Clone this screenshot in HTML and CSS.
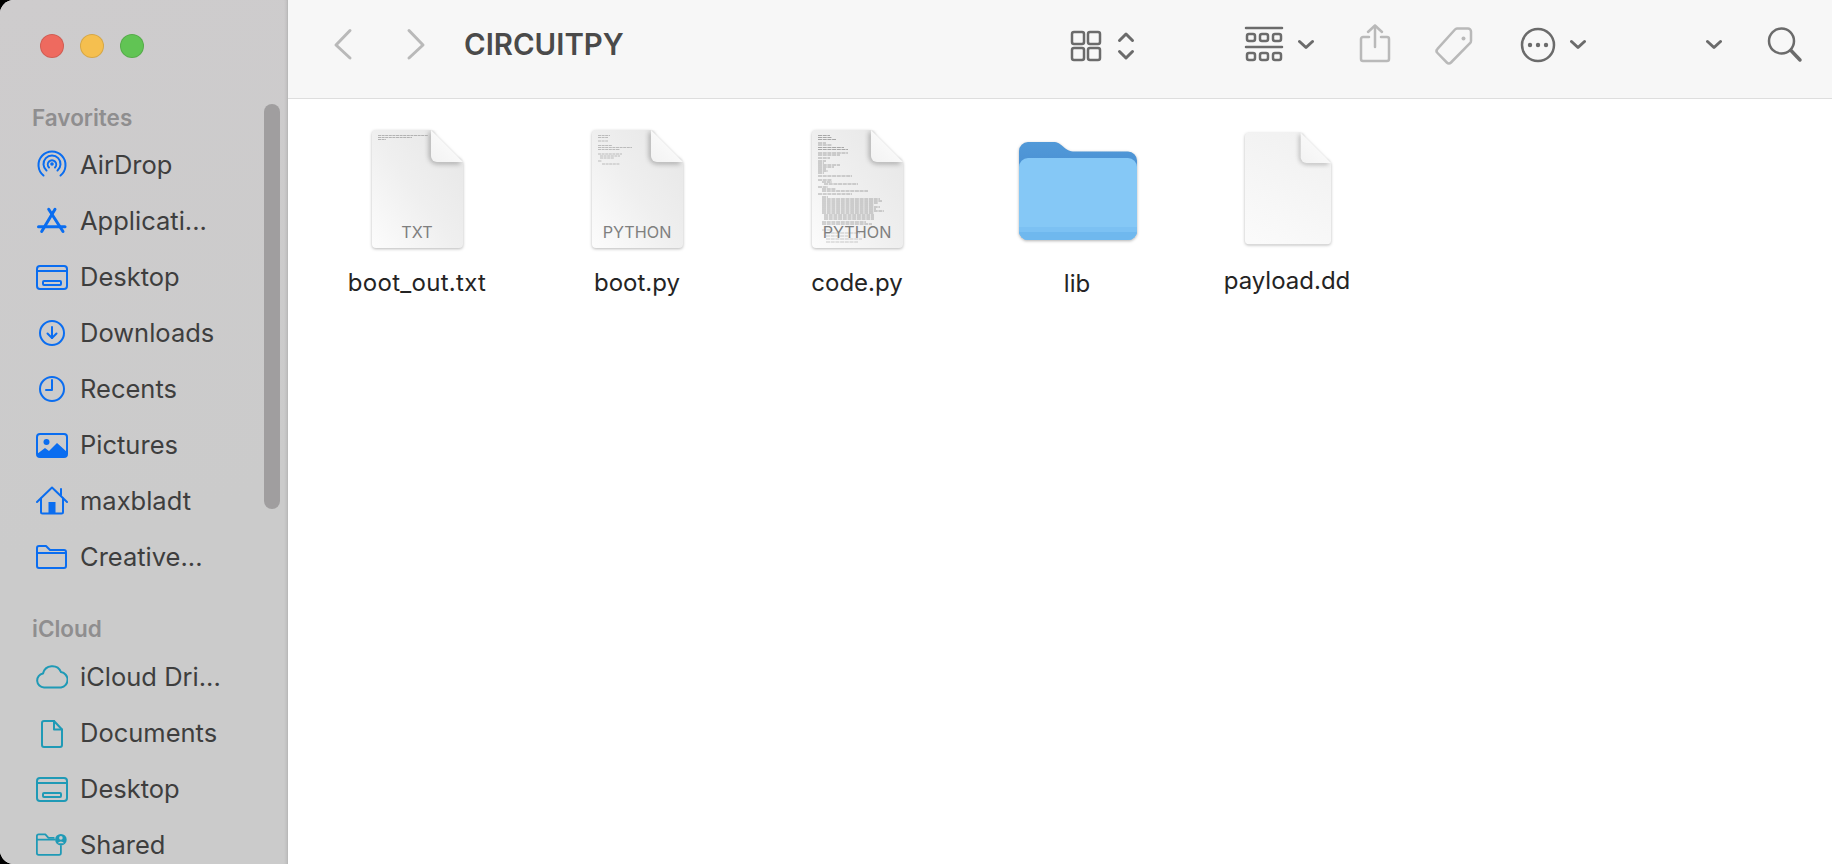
FILE: index.html
```html
<!DOCTYPE html>
<html lang="en">
<head>
    <meta charset="UTF-8">
    <title>CIRCUITPY</title>
    <link rel="stylesheet" href="styles.css">
</head>
<body>
<svg class="defs" width="0" height="0">
    <defs>
        <linearGradient id="paper" x1="0" y1="1" x2="0.9" y2="0.15">
            <stop offset="0" stop-color="#fcfcfc"/>
            <stop offset="0.55" stop-color="#efefef"/>
            <stop offset="1" stop-color="#e8e8e8"/>
        </linearGradient>
        <linearGradient id="blank" x1="0.2" y1="1" x2="0.6" y2="0">
            <stop offset="0" stop-color="#fafafa"/>
            <stop offset="1" stop-color="#f1f1f1"/>
        </linearGradient>
        <linearGradient id="fold" x1="0" y1="1" x2="1" y2="0">
            <stop offset="0" stop-color="#f2f2f2"/>
            <stop offset="1" stop-color="#ffffff"/>
        </linearGradient>
        <linearGradient id="tab" x1="0" y1="0" x2="0" y2="1">
            <stop offset="0" stop-color="#5199d8"/>
            <stop offset="0.3" stop-color="#4a90d3"/>
        </linearGradient>
        <filter id="soft" x="-40%" y="-40%" width="180%" height="180%">
            <feGaussianBlur stdDeviation="2.500"/>
        </filter>
        <symbol id="sheet" viewBox="0 0 91 118">
            <path d="M4 0H59L91 32V114a4 4 0 0 1-4 4H4a4 4 0 0 1-4-4V4a4 4 0 0 1 4-4Z" fill="url(#paper)"/>
            <path d="M59 2V26a6 6 0 0 0 6 6H88" fill="none" stroke="#000" stroke-opacity=".4" stroke-width="3" filter="url(#soft)"/>
            <path d="M59 0V26a6 6 0 0 0 6 6H91Z" fill="url(#fold)"/>
        </symbol>
        <symbol id="sheet-blank" viewBox="0 0 91 118">
            <path d="M4 0H59L91 32V114a4 4 0 0 1-4 4H4a4 4 0 0 1-4-4V4a4 4 0 0 1 4-4Z" fill="url(#blank)"/>
            <path d="M59 2V26a6 6 0 0 0 6 6H88" fill="none" stroke="#000" stroke-opacity=".3" stroke-width="3" filter="url(#soft)"/>
            <path d="M59 0V26a6 6 0 0 0 6 6H91Z" fill="url(#fold)"/>
        </symbol>
        <symbol id="tray" viewBox="0 0 32 32">
            <rect x="1" y="5" width="30" height="23" rx="3"/>
            <path d="M1 10H31"/>
            <rect class="solid" x="7" y="20" width="18" height="4" rx="1"/>
        </symbol>
        <symbol id="chev" viewBox="0 0 16 44">
            <path d="M1.500 17.500L8 23.500L14.500 17.500"/>
        </symbol>
    </defs>
</svg>

<div class="window">
    <aside class="sidebar">
        <div class="lights">
            <span class="light red"></span>
            <span class="light yellow"></span>
            <span class="light green"></span>
        </div>

        <h5>Favorites</h5>
        <div class="row blue">
            <svg class="ic" viewBox="0 0 32 32"><path d="M7.500 26.500a13.500 13.500 0 1 1 17 0"/><path d="M10.500 21.500a8.500 8.500 0 1 1 11 0"/><path d="M13 18.500a4.200 4.200 0 1 1 6 0"/><circle class="solid" cx="16" cy="15" r="1.800"/></svg>
            <span>AirDrop</span>
        </div>
        <div class="row blue">
            <svg class="ic thick" viewBox="0 0 32 32"><path d="M12.700 4.300L27 26.500"/><path d="M19 4.300L5.700 26.500"/><path d="M2.500 21.700H29"/></svg>
            <span>Applicati...</span>
        </div>
        <div class="row blue">
            <svg class="ic"><use href="#tray"/></svg>
            <span>Desktop</span>
        </div>
        <div class="row blue">
            <svg class="ic" viewBox="0 0 32 32"><circle cx="16" cy="16" r="12"/><path d="M16 10V21"/><path d="M11.500 16.500L16 21L20.500 16.500"/></svg>
            <span>Downloads</span>
        </div>
        <div class="row blue">
            <svg class="ic" viewBox="0 0 32 32"><circle cx="16" cy="16" r="12"/><path d="M16 7V17H10"/></svg>
            <span>Recents</span>
        </div>
        <div class="row blue">
            <svg class="ic" viewBox="0 0 32 32"><rect x="1" y="5" width="30" height="23" rx="3"/><circle class="solid" cx="10.500" cy="13" r="3"/><path class="solid" d="M1 25L9 19L13 22L21 14L31 23V26a2 2 0 0 1-2 2H3a2 2 0 0 1-2-2Z"/></svg>
            <span>Pictures</span>
        </div>
        <div class="row blue">
            <svg class="ic" viewBox="0 0 32 32"><path d="M1 17L16 2.500L31 17"/><path d="M5 13.500V27a1.500 1.500 0 0 0 1.500 1.500H25.500A1.500 1.500 0 0 0 27 27V13.500"/><path d="M25 10V4"/><rect class="solid" x="12.500" y="17" width="7" height="11"/></svg>
            <span>maxbladt</span>
        </div>
        <div class="row blue">
            <svg class="ic" viewBox="0 0 32 32"><path d="M1 7a2 2 0 0 1 2-2H10L14 9H28a2 2 0 0 1 2 2V25a2 2 0 0 1-2 2H3a2 2 0 0 1-2-2Z"/><path d="M1 12H30"/></svg>
            <span>Creative...</span>
        </div>

        <h5 class="second">iCloud</h5>
        <div class="row teal">
            <svg class="ic" viewBox="0 0 32 32"><path d="M8 26.500a7 7 0 0 1-1-13.900a9.500 9.500 0 0 1 18-1.500a7.800 7.800 0 0 1 0 15.400Z"/></svg>
            <span>iCloud Dri...</span>
        </div>
        <div class="row teal">
            <svg class="ic" viewBox="0 0 32 32"><path d="M8 4H18L26 12.500V28a2 2 0 0 1-2 2H8a2 2 0 0 1-2-2V6a2 2 0 0 1 2-2Z"/><path d="M18 4V12.500H26"/></svg>
            <span>Documents</span>
        </div>
        <div class="row teal">
            <svg class="ic"><use href="#tray"/></svg>
            <span>Desktop</span>
        </div>
        <div class="row teal">
            <svg class="ic wide" viewBox="0 0 36 32"><path d="M20 8H14L10.500 4H3a2 2 0 0 0-2 2V25a2 2 0 0 0 2 2H26a2 2 0 0 0 2-2V17"/><path d="M1 10H21"/><circle class="solid" cx="28" cy="10" r="6.500"/><circle cx="28" cy="8" r="2" fill="#cbcbcb" stroke="none"/><path d="M24.500 14a4 3.500 0 0 1 7 0Z" fill="#cbcbcb" stroke="none"/></svg>
            <span>Shared</span>
        </div>
        <div class="scroll"></div>
    </aside>

    <main class="content">
        <header class="toolbar">
            <svg class="tool dim back" viewBox="0 0 16 44"><path d="M15 6.500L1 21L15 34"/></svg>
            <svg class="tool dim forward" viewBox="0 0 16 44"><path d="M1 6.500L15 21L1 34"/></svg>
            <h1>CIRCUITPY</h1>
            <svg class="tool grid4" viewBox="0 0 30 44"><rect x="1" y="8" width="12" height="12" rx="2"/><rect x="17" y="8" width="12" height="12" rx="2"/><rect x="1" y="24" width="12" height="12" rx="2"/><rect x="17" y="24" width="12" height="12" rx="2"/></svg>
            <svg class="tool updown" viewBox="0 0 16 44"><path d="M1.500 16.500L8 10L14.500 16.500"/><path d="M1.500 27.500L8 34L14.500 27.500"/></svg>
            <svg class="tool groupby" viewBox="0 0 36 44"><path d="M0 4H36M0 23H36" stroke-width="2.500"/><rect x="1" y="10" width="8" height="7" rx="2"/><rect x="14" y="10" width="8" height="7" rx="2"/><rect x="27" y="10" width="8" height="7" rx="2"/><rect x="1" y="29" width="8" height="7" rx="2"/><rect x="14" y="29" width="8" height="7" rx="2"/><rect x="27" y="29" width="8" height="7" rx="2"/></svg>
            <svg class="tool chev c1"><use href="#chev"/></svg>
            <svg class="tool dim share" viewBox="0 0 30 44"><path d="M15 23V2"/><path d="M8 8L15 1.500L22 8"/><path d="M9 13H3a2 2 0 0 0-2 2V35a2 2 0 0 0 2 2H27a2 2 0 0 0 2-2V15a2 2 0 0 0-2-2H21"/></svg>
            <svg class="tool dim tag" viewBox="0 0 38 44"><path d="M22 4.500H33a3 3 0 0 1 3 3V17a3 3 0 0 1-1 2.200L16 38.500a3 3 0 0 1-4.200 0L2.500 29a3 3 0 0 1 0-4.200L20 5.500a3 3 0 0 1 2-1Z"/><circle class="dot" cx="28.500" cy="14.500" r="2"/></svg>
            <svg class="tool more" viewBox="0 0 34 44"><circle cx="17" cy="21" r="16"/><circle class="dot" cx="9" cy="21" r="2.200"/><circle class="dot" cx="17" cy="21" r="2.200"/><circle class="dot" cx="25" cy="21" r="2.200"/></svg>
            <svg class="tool chev c2"><use href="#chev"/></svg>
            <svg class="tool chev c3"><use href="#chev"/></svg>
            <svg class="tool search" viewBox="0 0 33 44"><circle cx="13.500" cy="17" r="12.500"/><path d="M23 26.500L32 36" stroke-width="3.500"/></svg>
        </header>

        <section class="files">
            <div class="file">
                <div class="doc">
                    <svg class="sheet"><use href="#sheet"/></svg>
                    <svg class="scribble" viewBox="0 0 91 118"><path d="M6 5.500H56M6 7.500H40M6 9.500H14" stroke="#999" stroke-width=".7" stroke-dasharray="3 .6"/></svg>
                    <span class="kind">TXT</span>
                </div>
                <p class="long">boot_out.txt</p>
            </div>
            <div class="file">
                <div class="doc">
                    <svg class="sheet"><use href="#sheet"/></svg>
                    <svg class="scribble" viewBox="0 0 91 118"><path d="M6 5.500H18M6 7.500H16M6 11H16M6 15.500H20M6 17.500H40M6 19.500H28M6 24H30M8 26H28M8 28H22M6 31H10M10 34H28" stroke="#999" stroke-width=".6" stroke-dasharray="3 .6"/></svg>
                    <span class="kind">PYTHON</span>
                </div>
                <p>boot.py</p>
            </div>
            <div class="file">
                <div class="doc">
                    <svg class="sheet"><use href="#sheet"/></svg>
                    <svg class="scribble" viewBox="0 0 91 118"><path d="M6 5.500H18M6 7.500H20M6 9.500H24M6 13H14M6 15H20M6 17.500H32M6 19.500H36M6 23H36M6 25H28M6 28H18M6 31H14M6 33H12M6 35H28M6 37H22M6 39H14M6 41H16M6 43H12M6 46H40M6 50H20M10 52H20M12 54H46M6 57H16M10 59H24M10 61H56M6 64H40M10 67H16M10 69H68M10 71H70M10 73H66M10 75H62M10 77H68M10 79H64M10 81H72M10 83H62M12 85H62M12 87H62M12 89H62M10 92H54M10 94H60" stroke="#808080" stroke-width=".65" stroke-dasharray="4 .7"/><path d="M10 100H20M14 103H48M14 106H36M14 109H50M14 112H46" stroke="#aaa" stroke-width=".6" stroke-dasharray="4 .7"/></svg>
                    <span class="kind">PYTHON</span>
                </div>
                <p>code.py</p>
            </div>
            <div class="file">
                <svg class="folder" viewBox="0 0 118 98">
                    <path d="M9 0H34C39 0 41 2 44 4.500C48 8 50 9.500 56 9.500H109a9 9 0 0 1 9 9V89a9 9 0 0 1-9 9H9a9 9 0 0 1-9-9V9a9 9 0 0 1 9-9Z" fill="url(#tab)"/>
                    <rect y="16" width="118" height="82" rx="9" fill="#85c8f6"/>
                    <path d="M0 85H118V89a9 9 0 0 1-9 9H9a9 9 0 0 1-9-9Z" fill="#7cc1f3"/>
                    <path d="M0 90H118V89a9 9 0 0 1-9 9H9a9 9 0 0 1-9-9Z" fill="#6fb8ee"/>
                </svg>
                <p>lib</p>
            </div>
            <div class="file last">
                <div class="doc plain">
                    <svg class="sheet"><use href="#sheet-blank"/></svg>
                </div>
                <p>payload.dd</p>
            </div>
        </section>
    </main>
</div>
</body>
</html>
```
FILE: styles.css
```css
html, body{
    margin: 0;
    height: 100%;
    background-color: #000;
    overflow: hidden;
}
body{
    font-family: "Inter", "Liberation Sans", sans-serif;
}
.defs{
    display: block;
    height: 0;
}
.window{
    display: flex;
    height: 864px;
    background-color: #fff;
    border-radius: 14px 0 0 14px;
    overflow: hidden;
}

/* sidebar */
.sidebar{
    position: relative;
    width: 287px;
    flex: none;
    background: linear-gradient(165deg, #cecccd, #cbcbcb 60%);
    border-right: 1px solid #b9b9b9;
    box-shadow: inset -3px 0 3px -2px rgba(0,0,0,.08);
    overflow: hidden;
}
.lights{
    display: flex;
    gap: 16px;
    padding: 34px 0 0 40px;
    height: 30px;
}
.light{
    width: 24px;
    height: 24px;
    box-sizing: border-box;
    border-radius: 50%;
    border: 1px solid rgba(0,0,0,.12);
}
.red{ background-color: #ee6a5f; }
.yellow{ background-color: #f5bf4f; }
.green{ background-color: #61c454; }
.sidebar h5{
    margin: 35px 0 0 32px;
    height: 38px;
    line-height: 38px;
    font-size: 22.500px;
    font-weight: 600;
    color: #8f8e8f;
}
.sidebar h5.second{
    margin-top: 25px;
    height: 39px;
    line-height: 38px;
}
.row{
    display: flex;
    align-items: center;
    gap: 12px;
    height: 56px;
    padding-left: 36px;
    font-size: 25.500px;
}
.row span{
    padding-bottom: 2px;
    color: #3e3e3e;
}
.blue{ color: #0a6df0; }
.teal{ color: #1f9ab6; }
.ic{
    width: 32px;
    height: 32px;
    flex: none;
    fill: none;
    stroke: currentColor;
    stroke-width: 2;
    stroke-linecap: round;
    stroke-linejoin: round;
}
.ic.thick{
    stroke-width: 3;
}
.ic.wide{
    overflow: visible;
}
.ic .solid{
    fill: currentColor;
    stroke: none;
}
.scroll{
    position: absolute;
    left: 264px;
    top: 104px;
    width: 16px;
    height: 405px;
    border-radius: 8px;
    background-color: #a09e9f;
}

/* toolbar */
.content{
    flex: 1;
    min-width: 0;
}
.toolbar{
    display: flex;
    align-items: flex-start;
    box-sizing: border-box;
    height: 99px;
    padding: 24px 0 0 47px;
    background-color: #f7f7f7;
    border-bottom: 1px solid #dedede;
}
.toolbar h1{
    margin: -1px 0 0 40px;
    font-size: 29.400px;
    font-weight: 600;
    line-height: 44px;
    color: #4a4a4a;
}
.tool{
    height: 44px;
    flex: none;
    fill: none;
    stroke: #6b6b6b;
    stroke-width: 2.500;
    stroke-linecap: round;
    stroke-linejoin: round;
    overflow: visible;
}
.tool.dim{
    stroke: #b9b9b9;
}
.back, .forward{
    stroke-width: 3;
}
.tool .dot{
    fill: #6b6b6b;
    stroke: none;
}
.tool.dim .dot{
    fill: #b9b9b9;
}
.chev, .updown{
    stroke-width: 3;
}
.chev{ width: 16px; }
.back{ width: 16px; }
.forward{ width: 16px; margin-left: 57px; }
.grid4{ width: 30px; margin-left: auto; }
.updown{ width: 16px; margin-left: 17px; }
.groupby{ width: 36px; margin-left: 112px; }
.c1{ margin-left: 16px; }
.share{ width: 30px; margin-left: 46px; }
.tag{ width: 38px; margin-left: 45px; }
.more{ width: 34px; margin-left: 48px; }
.c2{ margin-left: 15px; }
.c3{ margin-left: 120px; }
.search{ width: 33px; margin: 0 31px 0 46px; }

/* file grid */
.files{
    display: flex;
    padding: 31px 0 0 19px;
}
.file{
    width: 220px;
    text-align: center;
}
.file.last{
    width: 200px;
}
.file p{
    margin: 21px 0 0;
    font-size: 24px;
    line-height: 28px;
    color: #242424;
}
.file p.long{
    letter-spacing: .3px;
}
.doc{
    position: relative;
    width: 91px;
    height: 118px;
    margin: 0 auto;
}
.doc .sheet, .scribble{
    position: absolute;
    left: 0;
    top: 0;
    width: 91px;
    height: 118px;
    filter: drop-shadow(0 1.500px 1.500px rgba(0,0,0,.28));
}
.scribble{
    filter: none;
}
.kind{
    position: absolute;
    left: 0;
    right: 0;
    top: 92px;
    font-size: 16.200px;
    line-height: 20px;
    color: #7f7f7f;
}
.doc.plain{
    width: 86px;
    height: 113px;
    margin-left: 58px;
    padding-top: 2px;
}
.doc.plain .sheet{
    width: 86px;
    height: 113px;
    top: 2px;
}
.file.last p{
    margin-top: 22px;
}
.folder{
    display: block;
    width: 118px;
    height: 98px;
    margin: 12px 0 30px 52px;
    filter: drop-shadow(0 1.500px 1.500px rgba(0,0,0,.3));
}
```
